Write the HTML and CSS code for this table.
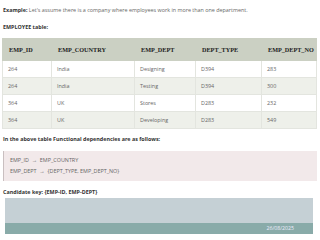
FILE: index.html
```html
<!DOCTYPE html>
<html lang="en">
  <head>
    <meta charset="UTF-8" />
    <title>Functional Dependency</title>
    <link rel="stylesheet" href="styles.css">
  </head>
  <body>
    <p class="intro"><b>Example:</b> Let's assume there is a company where employees work in more than one department.</p>
    <p class="label">EMPLOYEE table:</p>

    <table class="emp-table">
      <thead>
        <tr>
          <th class="c1">EMP_ID</th>
          <th class="c2">EMP_COUNTRY</th>
          <th class="c3">EMP_DEPT</th>
          <th class="c4">DEPT_TYPE</th>
          <th class="c5">EMP_DEPT_NO</th>
        </tr>
      </thead>
      <tbody>
        <tr><td>264</td><td>India</td><td>Designing</td><td>D394</td><td>283</td></tr>
        <tr><td>264</td><td>India</td><td>Testing</td><td>D394</td><td>300</td></tr>
        <tr><td>364</td><td>UK</td><td>Stores</td><td>D283</td><td>232</td></tr>
        <tr><td>364</td><td>UK</td><td>Developing</td><td>D283</td><td>549</td></tr>
      </tbody>
    </table>

    <p class="label">In the above table Functional dependencies are as follows:</p>

    <div class="deps">
      <div>EMP_ID &nbsp;&rarr;&nbsp; EMP_COUNTRY</div>
      <div>EMP_DEPT &nbsp;&rarr;&nbsp; {DEPT_TYPE, EMP_DEPT_NO}</div>
    </div>

    <p class="label">Candidate key: {EMP-ID, EMP-DEPT}</p>

    <div class="banner">
      <div class="banner-top"></div>
      <div class="banner-foot">26/08/2025</div>
    </div>
  </body>
</html>
```

FILE: styles.css
```css
body {
  margin: 0;
  padding: 0 3px;
  font-family: "Open Sans", "Liberation Sans", sans-serif;
  font-size: 5.4px;
  color: #666;
  background: #fff;
}

p {
  margin: 0;
}

b {
  color: #333;
}

.intro {
  padding-top: 6px;
  line-height: 8px;
}

.label {
  font-weight: bold;
  color: #333;
  line-height: 8px;
}

.intro + .label {
  margin-top: 9px;
}

.emp-table {
  width: calc(100% + 1px);
  margin: 7px 0 0 -1px;
  border-collapse: collapse;
  table-layout: fixed;
}

.emp-table th,
.emp-table td {
  border: 1px solid #e3e5df;
  text-align: left;
  padding: 0 0 0 5px;
  white-space: nowrap;
  overflow: hidden;
}

.emp-table th {
  background: #cbd0c3;
  font-family: "Liberation Serif", serif;
  font-size: 6.2px;
  font-weight: bold;
  color: #222;
  height: 21px;
  border-color: #cbd0c3;
  padding-left: 6px;
}

.emp-table td {
  height: 16px;
}

.emp-table tbody tr:nth-child(even) td {
  background: #eef0ea;
}

.c1 { width: 42px; }
.c2 { width: 76px; }
.c3 { width: 54px; }
.c4 { width: 59px; }

.emp-table + .label {
  margin-top: 6px;
}

.deps {
  margin-top: 8px;
  background: #f2e9ea;
  border-left: 1px solid #c9bfc0;
  padding: 4px 6px 4px;
  line-height: 11px;
}

.deps + .label {
  margin-top: 7px;
}

.banner {
  margin: 2px 4px 0 2px;
}

.banner-top {
  height: 25px;
  background: #c5d0d5;
}

.banner-foot {
  height: 11px;
  background: #89aba9;
  color: #eef;
  text-align: right;
  padding-right: 19px;
  line-height: 11px;
  font-size: 5.2px;
}
```
